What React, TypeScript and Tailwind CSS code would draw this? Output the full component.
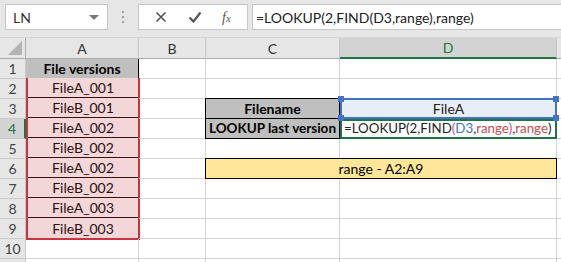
import type { ReactNode } from 'react'

const FONT = { fontFamily: 'Lato, "Open Sans", sans-serif' }

const versions = ['FileA_001', 'FileB_001', 'FileA_002', 'FileB_002', 'FileA_002', 'FileB_002', 'FileA_003', 'FileB_003']
const rows = [2, 3, 4, 5, 6, 7, 8, 9, 10, 11]

function RowNum({ n, active }: { n: number; active?: boolean }) {
  return (
    <div
      className={`col-start-1 flex items-center justify-center border-b border-r border-[#c8c8c8] text-[14px] ${
        active ? 'bg-[#d3d3d3] text-[#217346] border-r-2 border-r-[#217346]' : 'bg-[#e6e6e6] text-[#444]'
      }`}
      style={{ gridRowStart: n + 1 }}
    >
      {n < 11 ? n : null}
    </div>
  )
}

function Cell({ col, row, last, children }: { col: string; row: number; last?: boolean; children?: ReactNode }) {
  return (
    <div className={`${col} border-b ${last ? '' : 'border-r'} border-[#d4d4d4]`} style={{ gridRowStart: row + 1 }}>
      {children}
    </div>
  )
}

function Formula() {
  return (
    <>
      <span>=LOOKUP(2,FIND</span>
      <span className="text-[#c4508a]">(</span>
      <span className="text-[#4472c4]">D3</span>
      <span>,</span>
      <span className="text-[#c0504d]">range</span>
      <span className="text-[#c4508a]">)</span>
      <span>,</span>
      <span className="text-[#c0504d]">range</span>
      <span>)</span>
    </>
  )
}

export default function App() {
  return (
    <div className="w-[561px] h-[262px] overflow-hidden bg-white text-black" style={FONT}>
      {/* Toolbar */}
      <div className="h-[38px] bg-[#e6e6e6] flex items-start pt-[4px] pl-[5px] border-b border-[#d6d6d6]">
        <div className="w-[103px] h-[26px] bg-white border border-[#c6c6c6] flex items-center justify-between pl-[7px] pr-[8px] text-[14px] text-[#333]">
          <span>LN</span>
          <span className="w-0 h-0 border-l-[5px] border-r-[5px] border-t-[5px] border-l-transparent border-r-transparent border-t-[#777]" />
        </div>
        <div className="w-[30px] h-[26px] flex flex-col items-center justify-center gap-[3px]">
          <span className="w-[2px] h-[2px] bg-[#a0a0a0]" />
          <span className="w-[2px] h-[2px] bg-[#a0a0a0]" />
          <span className="w-[2px] h-[2px] bg-[#a0a0a0]" />
        </div>
        <div className="w-[110px] h-[26px] bg-white border border-[#c6c6c6] flex items-center justify-around px-[6px] text-[#555]">
          <svg width="12" height="12" viewBox="0 0 12 12" stroke="#555" strokeWidth="1.6" fill="none">
            <path d="M1.5 1.5l9 9M10.5 1.5l-9 9" />
          </svg>
          <svg width="14" height="12" viewBox="0 0 14 12" stroke="#555" strokeWidth="2.2" fill="none">
            <path d="M1.5 6.5l4 4 7-9" />
          </svg>
          <span className="italic text-[14px] text-[#555]" style={{ fontFamily: '"Liberation Serif", serif' }}>
            f<span className="text-[11px]">x</span>
          </span>
        </div>
        <div className="ml-[4px] flex-1 h-[26px] bg-white border border-[#c6c6c6] border-r-0 flex items-center pl-[3px] text-[14px] text-[#222]">
          =LOOKUP(2,FIND(D3,range),range)
        </div>
      </div>

      {/* Sheet */}
      <div className="grid grid-cols-[26px_113px_67px_134px_217px_1fr] grid-rows-[21px_repeat(11,20px)] text-[14px]">
        {/* Header row */}
        <div className="bg-[#e6e6e6] border-b border-r border-[#ababab] flex items-end justify-end pr-[3px] pb-[3px]">
          <svg width="14" height="14" viewBox="0 0 14 14">
            <path d="M14 0V14H0Z" fill="#b4b4b4" />
          </svg>
        </div>
        <div className="bg-[#e6e6e6] border-b border-r border-b-[#ababab] border-r-[#c8c8c8] flex items-center justify-center text-[#333]">A</div>
        <div className="bg-[#e6e6e6] border-b border-r border-b-[#ababab] border-r-[#c8c8c8] flex items-center justify-center text-[#333]">B</div>
        <div className="bg-[#e6e6e6] border-b border-r border-b-[#ababab] border-r-[#c8c8c8] flex items-center justify-center text-[#333]">C</div>
        <div className="bg-[#d3d3d3] border-b-2 border-r border-b-[#217346] border-r-[#c8c8c8] flex items-center justify-center text-[#217346]">D</div>
        <div className="bg-[#e6e6e6] border-b border-b-[#ababab]" />

        {/* Row 1 */}
        <RowNum n={1} />
        <div className="col-start-2 row-start-2 bg-[#bfbfbf] border-r border-r-black border-b border-b-[#c9343f] flex items-center justify-center font-bold">
          File versions
        </div>
        <Cell col="col-start-3" row={1} />
        <Cell col="col-start-4" row={1} />
        <Cell col="col-start-5" row={1} />
        <Cell col="col-start-6" row={1} last />

        {rows.map(r => (
          <RowNum key={`n${r}`} n={r} active={r === 4} />
        ))}

        {/* A2:A9 */}
        <div className="col-start-2 row-start-3 row-span-8 -mt-px mr-[-1px] mb-[-1px] border-2 border-t-0 border-[#c9343f] bg-[#f3d6d8] grid grid-rows-[repeat(8,minmax(0,1fr))]">
          {versions.map((v, i) => (
            <div
              key={i}
              className={`flex items-center justify-center text-[#2b1010] ${i < versions.length - 1 ? 'border-b border-[#3a1010]' : ''}`}
            >
              {v}
            </div>
          ))}
        </div>
        <Cell col="col-start-2" row={10} />
        <Cell col="col-start-2" row={11} />

        {rows.map(r => (
          <Cell key={`b${r}`} col="col-start-3" row={r} />
        ))}
        {[2, 5, 7, 8, 9, 10, 11].map(r => (
          <div key={`c${r}`} className="contents">
            <Cell col="col-start-4" row={r} />
            <Cell col="col-start-5" row={r} />
          </div>
        ))}
        {rows.map(r => (
          <Cell key={`e${r}`} col="col-start-6" row={r} last />
        ))}

        {/* C3 / D3 */}
        <div className="col-start-4 row-start-4 -mt-px -ml-px bg-[#bfbfbf] border border-black flex items-center justify-center font-bold">
          Filename
        </div>
        <div className="col-start-5 row-start-4 -mt-px relative bg-[#e8eef8] border-2 border-[#4472c4] flex items-center justify-center text-[#222]">
          FileA
          <span className="absolute -left-[4px] -top-[4px] w-[6px] h-[6px] bg-[#4472c4]" />
          <span className="absolute -right-[4px] -top-[4px] w-[6px] h-[6px] bg-[#4472c4]" />
          <span className="absolute -left-[4px] -bottom-[4px] w-[6px] h-[6px] bg-[#4472c4]" />
          <span className="absolute -right-[4px] -bottom-[4px] w-[6px] h-[6px] bg-[#4472c4]" />
        </div>

        {/* C4 / D4 */}
        <div className="col-start-4 row-start-5 -ml-px bg-[#bfbfbf] border border-t-0 border-black flex items-center justify-center font-bold whitespace-nowrap text-[13.5px]">
          LOOKUP last version
        </div>
        <div className="col-start-5 row-start-5 border-2 border-[#217346] flex items-center pl-[2px] whitespace-nowrap text-[13.3px] text-[#222]">
          <Formula />
        </div>

        {/* C6:D6 merged */}
        <div className="col-start-4 col-span-2 row-start-7 -mt-px -ml-px bg-[#ffe699] border border-black flex items-center justify-center">
          range - A2:A9
        </div>
      </div>
    </div>
  )
}
